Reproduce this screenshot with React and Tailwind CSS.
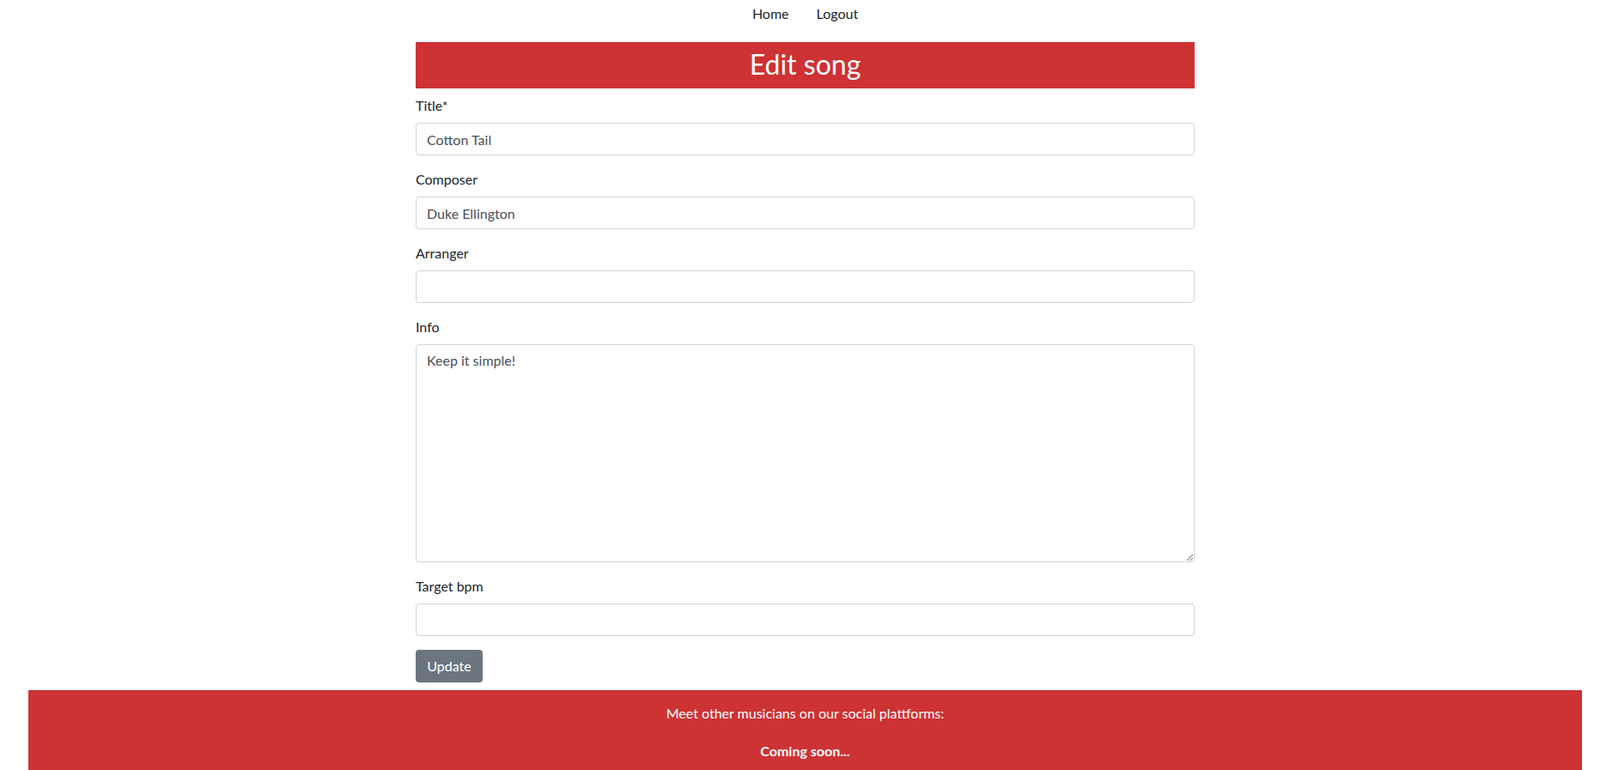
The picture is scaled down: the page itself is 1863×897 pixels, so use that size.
export default function App() {
  const inputCls =
    "block w-full h-[38px] px-3 py-[6px] text-base leading-6 text-[#495057] bg-white border border-[#ced4da] rounded-[4px] outline-none";
  return (
    <div className="min-h-screen bg-white pl-[12px] text-[#212529] font-['Lato',sans-serif] text-base leading-6 overflow-hidden">
      <nav className="flex justify-center h-[40px]">
        <a className="px-4 pt-[4px] text-[#212529]" href="#">Home</a>
        <a className="px-4 pt-[4px] text-[#212529]" href="#">Logout</a>
      </nav>
      <div className="w-[907px] mx-auto mt-[9px]">
        <h1 className="bg-[#cd3234] text-white text-center text-[32px] leading-[38px] pt-[7px] pb-[9px] h-[54px] mb-[8px] font-normal">
          Edit song
        </h1>
        <form>
          <div className="mb-4">
            <label className="block mb-2">Title*</label>
            <input className={inputCls} defaultValue="Cotton Tail" />
          </div>
          <div className="mb-4">
            <label className="block mb-2">Composer</label>
            <input className={inputCls} defaultValue="Duke Ellington" />
          </div>
          <div className="mb-4">
            <label className="block mb-2">Arranger</label>
            <input className={inputCls} defaultValue="" />
          </div>
          <div className="mb-4">
            <label className="block mb-2">Info</label>
            <textarea
              rows={10}
              className="block w-full h-[254px] px-3 py-[6px] text-base leading-6 text-[#495057] bg-white border border-[#ced4da] rounded-[4px] outline-none resize-y"
              defaultValue="Keep it simple!"
            />
          </div>
          <div className="mb-4">
            <label className="block mb-2">Target bpm</label>
            <input className={inputCls} defaultValue="" />
          </div>
          <button
            type="button"
            className="h-[38px] w-[78px] bg-[#6c757d] text-white rounded-[4px] leading-6 text-center"
          >
            Update
          </button>
        </form>
      </div>
      <footer className="w-[1809px] mx-auto mt-[9px] bg-[#cd3234] text-white text-center pt-[15px] pb-[20px]">
        <p className="mb-[20px]">Meet other musicians on our social plattforms:</p>
        <p className="font-bold">Coming soon...</p>
      </footer>
    </div>
  );
}
